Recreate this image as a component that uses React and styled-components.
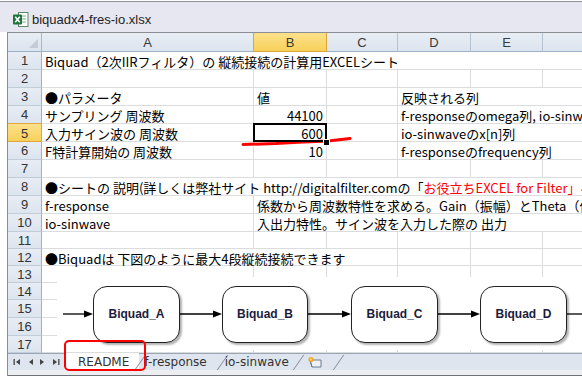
import React from 'react';
import styled, { createGlobalStyle, css } from 'styled-components';

const GlobalStyle = createGlobalStyle`
  html, body {
    margin: 0;
    padding: 0;
    background: #fff;
  }
  * {
    box-sizing: border-box;
  }
`;

const Window = styled.div`
  position: relative;
  width: 582px;
  height: 379px;
  overflow: hidden;
  padding-top: 1px;
  background: #fff;
  font-family: "Noto Sans CJK JP", sans-serif;
`;

const TitleBar = styled.div`
  height: 31px;
  border-top: 1px solid #8f9096;
  background: #e6e7f0;
  display: flex;
  align-items: center;
  gap: 3px;
  padding: 4px 0 0 12px;
`;

const TitleText = styled.span`
  font-family: "Liberation Sans", sans-serif;
  font-size: 13px;
  color: #1e1e1e;
`;

const Workbook = styled.div`
  margin-left: 7px;
  border-left: 1px solid #8a8d93;
  border-top: 1px solid #8a8d93;
`;

const Sheet = styled.div`
  position: relative;
  display: grid;
  grid-template-columns: 34px 212px 73px 71px 73px 72px 90px;
  grid-template-rows: 19px repeat(10, 18px) 17px 17px 17px 17px 18px 18px 17px;
  width: 625px;
`;

const headBg = css`
  background: linear-gradient(#e8edf4, #dce4ee);
`;

const activeHead = css`
  background: linear-gradient(#fce18c, #f8d15a);
  border-color: #e0a43c;
`;

const Corner = styled.div`
  ${headBg};
  position: relative;
  border-right: 1px solid #a9b8c9;
  border-bottom: 1px solid #9fb1c6;
  &::after {
    content: '';
    position: absolute;
    right: 3px;
    bottom: 3px;
    border-style: solid;
    border-width: 0 0 9px 9px;
    border-color: transparent transparent #c3ccd6 transparent;
  }
`;

const ColHead = styled.div`
  ${headBg};
  display: flex;
  align-items: center;
  justify-content: center;
  font-family: "Liberation Sans", sans-serif;
  font-size: 13px;
  color: #3a3a3a;
  border-right: 1px solid #b6c2d0;
  border-bottom: 1px solid #9fb1c6;
  ${p => p.$active && activeHead};
  ${p => p.$active && css`border-left: 1px solid #e0a43c; margin-left: -1px;`};
`;

const RowHead = styled.div`
  ${headBg};
  display: flex;
  align-items: center;
  justify-content: center;
  padding-top: 1px;
  font-family: "Liberation Sans", sans-serif;
  font-size: 13px;
  line-height: 14px;
  color: #333;
  border-right: 1px solid #9fb1c6;
  border-bottom: 1px solid #c3cdd9;
  ${p => p.$active && activeHead};
  ${p => p.$active && css`border-top: 1px solid #e0a43c; margin-top: -1px; padding-top: 2px;`};
`;

const Cell = styled.div`
  position: relative;
  grid-column: span ${p => p.$span || 1};
  border-right: 1px solid #dadcdd;
  border-bottom: 1px solid #dadcdd;
  padding: 2px 3px 0 3px;
  font-size: 13px;
  line-height: 15px;
  color: #000;
  white-space: nowrap;
  text-align: ${p => p.$align || 'left'};
  ${p => p.$selected && css`
    z-index: 2;
    &::after {
      content: '';
      position: absolute;
      top: -1px;
      left: -1px;
      right: -1px;
      bottom: -1px;
      border: 2px solid #000;
    }
    &::before {
      content: '';
      position: absolute;
      right: -3px;
      bottom: -4px;
      width: 5px;
      height: 5px;
      background: #000;
      outline: 1px solid #fff;
      z-index: 3;
    }
  `};
`;

const Red = styled.span`
  color: #ff0000;
`;

const Canvas = styled.div`
  position: absolute;
  left: 49px;
  top: 244px;
  right: 0;
  height: 73px;
  background: #fff;
  display: flex;
  align-items: center;
  padding: 1px 0 0 6px;
`;

const Box = styled.div`
  flex: none;
  width: ${p => p.$w}px;
  height: 57px;
  border: 1.5px solid #222;
  border-radius: 14px;
  background: #fff;
  box-shadow: 2px 2px 2px rgba(0, 0, 0, 0.3);
  display: flex;
  align-items: center;
  justify-content: center;
  font-family: "Liberation Sans", sans-serif;
  font-weight: bold;
  font-size: 12px;
  color: #1c1c3c;
`;

const ArrowSvg = styled.svg`
  flex: none;
  display: block;
`;

const Arrow = ({ w, head = true }) => (
  <ArrowSvg width={w} height="12" viewBox={`0 0 ${w} 12`}>
    <line x1="0" y1="6" x2={head ? w - 7 : w} y2="6" stroke="#000" strokeWidth="1.3" />
    {head && <polygon points={`${w - 9},2.5 ${w},6 ${w - 9},9.5`} fill="#000" />}
  </ArrowSvg>
);

const TabBar = styled.div`
  height: 17px;
  background: #dfe5ee;
  border-top: 1px solid #9aa6b5;
  display: flex;
  align-items: stretch;
`;

const Nav = styled.div`
  width: 56px;
  display: flex;
  align-items: center;
  justify-content: space-around;
  padding: 0 2px 0 3px;
`;

const Tab = styled.div`
  position: relative;
  display: flex;
  align-items: center;
  padding: 0 ${p => p.$pr || 8}px 0 ${p => p.$pl || 8}px;
  font-family: "DejaVu Sans", sans-serif;
  font-size: 12px;
  color: #333;
  background: ${p => (p.$active ? '#fff' : 'transparent')};
  margin-top: ${p => (p.$active ? '-1px' : '0')};
  &::after {
    content: '';
    position: absolute;
    right: -2px;
    top: 1px;
    bottom: 0;
    width: 1px;
    background: #7f8b9b;
    transform: skewX(-35deg);
  }
`;

const BottomStrip = styled.div`
  height: 6px;
  background: #eceef2;
  border-bottom: 1px solid #6f7277;
`;

const Callout = styled.div`
  position: absolute;
  left: 64px;
  top: 340px;
  width: 82px;
  height: 31px;
  border: 2.5px solid #ff0000;
  border-radius: 5px;
  pointer-events: none;
`;

const Underline = styled.svg`
  position: absolute;
  left: 236px;
  top: 132px;
  pointer-events: none;
`;

const NavIcon = ({ dir, bar }) => (
  <svg width="8" height="8" viewBox="0 0 8 8">
    {dir === 'left' ? (
      <>
        {bar && <rect x="0.5" y="1" width="1.3" height="6" fill="#444" />}
        <polygon points="7,1 3,4 7,7" fill="#444" />
      </>
    ) : (
      <>
        <polygon points="1,1 5,4 1,7" fill="#444" />
        {bar && <rect x="6.2" y="1" width="1.3" height="6" fill="#444" />}
      </>
    )}
  </svg>
);

const rowsData = [
  [{ span: 6, text: 'Biquad（2次IIRフィルタ）の 縦続接続の計算用EXCELシート' }],
  [],
  [{ text: '●パラメータ' }, { text: '値' }, {}, { span: 3, text: '反映される列' }],
  [{ text: 'サンプリング 周波数' }, { text: '44100', align: 'right' }, {}, { span: 3, text: 'f-responseのomega列, io-sinwaveのomega列' }],
  [{ text: '入力サイン波の 周波数' }, { text: '600', align: 'right', selected: true }, {}, { span: 3, text: 'io-sinwaveのx[n]列' }],
  [{ text: 'F特計算開始の 周波数' }, { text: '10', align: 'right' }, {}, { span: 3, text: 'f-responseのfrequency列' }],
  [],
  [{
    span: 6,
    text: <>●シートの 説明(詳しくは弊社サイト http://digitalfilter.comの「<Red>お役立ちEXCEL for Filter」</Red>ページ参照)</>,
  }],
  [{ text: 'f-response' }, { span: 5, text: '係数から周波数特性を求める。Gain（振幅）とTheta（位相）' }],
  [{ text: 'io-sinwave' }, { span: 5, text: '入出力特性。サイン波を入力した際の 出力' }],
  [],
  [{ span: 3, text: '●Biquadは 下図のように最大4段縦続接続できます' }],
  [], [], [], [], [],
];

const columns = ['A', 'B', 'C', 'D', 'E', 'F'];

const renderRow = (row, i) => {
  const cells = [];
  let used = 0;
  row.forEach((c, j) => {
    cells.push(
      <Cell key={`${i}-${j}`} $span={c.span} $align={c.align} $selected={c.selected}>
        {c.text}
      </Cell>
    );
    used += c.span || 1;
  });
  for (let k = used; k < 6; k++) cells.push(<Cell key={`${i}-e${k}`} />);
  return [
    <RowHead key={`h${i}`} $active={i === 4}>{i + 1}</RowHead>,
    ...cells,
  ];
};

export default function App() {
  return (
    <Window>
      <GlobalStyle />
      <TitleBar>
        <svg width="17" height="17" viewBox="0 0 17 17">
          <rect x="6.5" y="1.5" width="9.5" height="14" fill="#fff" stroke="#5f8a66" />
          <path d="M9 5h5M9 8h5M9 11h5" stroke="#7fb086" />
          <rect x="1" y="3.5" width="9" height="10" rx="1" fill="#1d7339" />
          <path d="M3.2 5.8l4.6 5.4M7.8 5.8l-4.6 5.4" stroke="#fff" strokeWidth="1.6" />
        </svg>
        <TitleText>biquadx4-fres-io.xlsx</TitleText>
      </TitleBar>
      <Workbook>
        <Sheet>
          <Corner />
          {columns.map(c => (
            <ColHead key={c} $active={c === 'B'}>{c}</ColHead>
          ))}
          {rowsData.map(renderRow)}
          <Canvas>
            <Arrow w={30} />
            <Box $w={87}>Biquad_A</Box>
            <Arrow w={42} />
            <Box $w={86}>Biquad_B</Box>
            <Arrow w={43} />
            <Box $w={87}>Biquad_C</Box>
            <Arrow w={42} />
            <Box $w={87}>Biquad_D</Box>
            <Arrow w={24} head={false} />
          </Canvas>
        </Sheet>
        <TabBar>
          <Nav>
            <NavIcon dir="left" bar />
            <NavIcon dir="left" />
            <NavIcon dir="right" />
            <NavIcon dir="right" bar />
          </Nav>
          <Tab $active $pl={14} $pr={10}>README</Tab>
          <Tab $pl={5} $pr={14}>f-response</Tab>
          <Tab $pl={4} $pr={8}>io-sinwave</Tab>
          <Tab $pl={10} $pr={14}>
            <svg width="16" height="13" viewBox="0 0 16 13">
              <path d="M3 4h11v7H5z" fill="#eef2f7" stroke="#6b7c93" />
              <path d="M5 11l-2-7" stroke="#6b7c93" />
              <circle cx="4" cy="3.5" r="2.6" fill="#f5a623" />
              <circle cx="4" cy="3.5" r="1.1" fill="#ffe08a" />
            </svg>
          </Tab>
        </TabBar>
        <BottomStrip />
      </Workbook>
      <Underline width="120" height="18" viewBox="0 0 120 18">
        <path d="M7 12.5 L40 11.5 L62 10.2 L92 9 L114 6.5" stroke="#ff0000" strokeWidth="3" fill="none" strokeLinecap="round" />
      </Underline>
      <Callout />
    </Window>
  );
}
